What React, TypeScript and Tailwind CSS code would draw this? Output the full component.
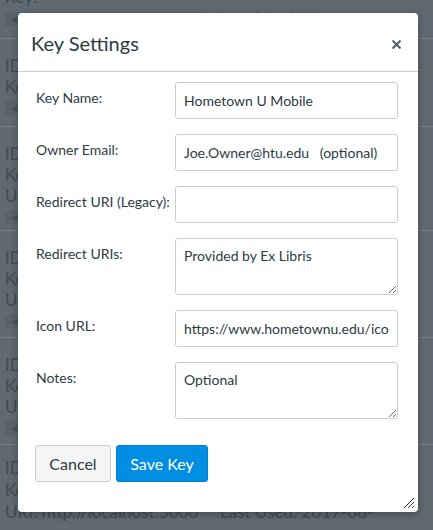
const rows = [
  { lines: ["ID", "Ke"], h: "h-[88px]" },
  { lines: ["ID", "Ke", "U"], h: "h-[104px]" },
  { lines: ["ID", "Ke", "U"], h: "h-[107px]" },
  { lines: ["ID", "Ke", "U"], h: "h-[107px]" },
];

function Strip() {
  return (
    <div className="flex items-center h-[14px] w-[200px] bg-[#58636c] mt-1">
      <span className="text-[8px] text-[#47525b] ml-[6px]">◀</span>
      <div className="h-[10px] w-[56px] bg-[#68737c] ml-[6px]" />
    </div>
  );
}

function Field({ label, value, area }: { label: string; value: string; area?: boolean }) {
  return (
    <div className="flex items-start">
      <label className="w-[139px] shrink-0 pt-[5px] text-[14px] leading-[21px] text-[#2d3b45]">{label}</label>
      {area ? (
        <textarea
          defaultValue={value}
          className="w-[223px] h-[57px] border border-[#c7cdd1] rounded-[3px] px-[8px] py-[7px] text-[14px] leading-[20px] text-[#2d3b45] outline-none"
        />
      ) : (
        <input
          defaultValue={value}
          className="w-[223px] h-[37px] border border-[#c7cdd1] rounded-[3px] px-[8px] text-[14px] text-[#2d3b45] outline-none"
        />
      )}
    </div>
  );
}

export default function App() {
  return (
    <div className="relative w-[433px] h-[530px] overflow-hidden bg-[#5f6a73] font-['Lato','Liberation_Sans',sans-serif] text-[#414c55]">
      {/* dimmed page behind */}
      <div className="flex flex-col">
        <div className="h-[39px] border-b border-[#737e87] flex items-start pl-[5px] pt-[8px] gap-[15px] relative">
          <span className="absolute left-[5px] top-[-12px] text-[17px] leading-[17px]">Key:</span>
          <Strip />
          <span className="text-[17px] leading-[17px] mt-[2px]">Last Used: Never</span>
        </div>
        {rows.map((r, i) => (
          <div key={i} className={`${r.h} border-b border-[#737e87] pl-[5px] pt-[16px]`}>
            {r.lines.map((l, j) => (
              <div key={j} className="text-[17px] leading-[21px]">{l}</div>
            ))}
            <Strip />
          </div>
        ))}
        <div className="pl-[5px] pt-[12px]">
          <div className="text-[17px] leading-[22px]">ID</div>
          <div className="text-[17px] leading-[22px]">Ke</div>
          <div className="flex text-[17px] leading-[22px]">
            <span className="w-[215px]">URI: http://localhost:5000</span>
            <span>Last Used: 2017-08-</span>
          </div>
        </div>
      </div>

      {/* modal */}
      <div className="absolute left-[18px] top-[13px] w-[400px] h-[499px] bg-white rounded-[4px] shadow-[0_2px_8px_rgba(0,0,0,0.3)] flex flex-col">
        <div className="h-[59px] border-b border-[#c7cdd1] flex items-center justify-between pl-[13px] pr-[16px]">
          <h2 className="text-[20px] text-[#2d3b45] pt-[2px]">Key Settings</h2>
          <svg width="11" height="11" viewBox="0 0 11 11" className="mt-[4px]">
            <path d="M1.5 1.5 L9.5 9.5 M9.5 1.5 L1.5 9.5" stroke="#555b60" strokeWidth="1.8" />
          </svg>
        </div>
        <div className="flex flex-col gap-[15px] pl-[18px] pt-[10px]">
          <Field label="Key Name:" value="Hometown U Mobile" />
          <Field label="Owner Email:" value="Joe.Owner@htu.edu   (optional)" />
          <Field label="Redirect URI (Legacy):" value="" />
          <Field label="Redirect URIs:" value="Provided by Ex Libris" area />
          <Field label="Icon URL:" value="https://www.hometownu.edu/icon.png" />
          <Field label="Notes:" value="Optional" area />
        </div>
        <div className="flex gap-[5px] pl-[17px] mt-[26px]">
          <button className="h-[37px] w-[76px] bg-[#f5f5f5] border border-[#c7cdd1] rounded-[3px] text-[16px] text-[#2d3b45]">Cancel</button>
          <button className="h-[37px] w-[92px] bg-[#008ee2] border border-[#0081cc] rounded-[3px] text-[16px] text-white">Save Key</button>
        </div>
        <svg width="12" height="12" viewBox="0 0 12 12" className="absolute right-[3px] bottom-[3px]">
          <path d="M11 1 L1 11 M11 5 L5 11 M11 9 L9 11" stroke="#333" strokeWidth="1" />
        </svg>
      </div>
    </div>
  );
}
